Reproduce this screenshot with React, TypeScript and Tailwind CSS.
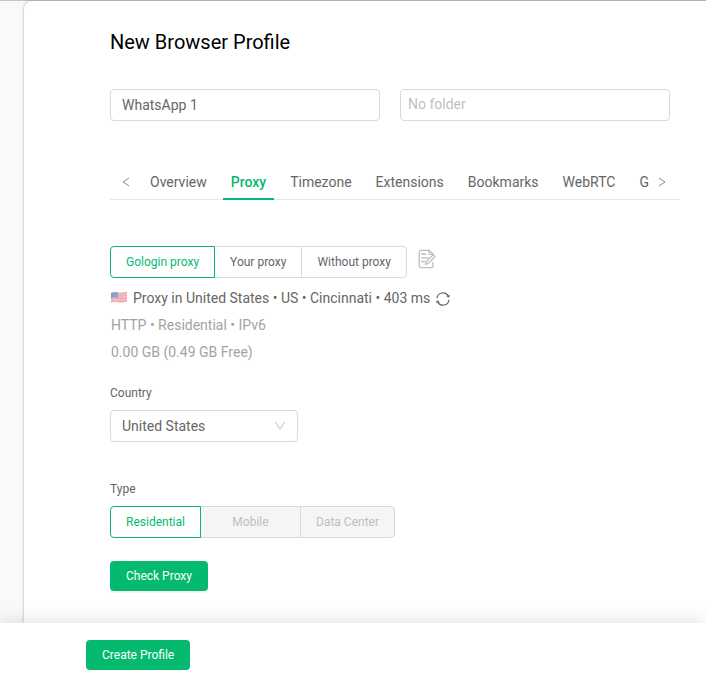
import { useState } from "react";

const tabs = ["Overview", "Proxy", "Timezone", "Extensions", "Bookmarks", "WebRTC", "G"];
const proxySources = ["Gologin proxy", "Your proxy", "Without proxy"];
const proxyTypes = [
  { name: "Residential", disabled: false, width: "w-[91px]" },
  { name: "Mobile", disabled: true, width: "w-[101px]" },
  { name: "Data Center", disabled: true, width: "w-[95px]" },
];

function Chevron({ d, className }: { d: string; className: string }) {
  return (
    <svg viewBox="0 0 12 12" fill="none" stroke="currentColor" className={className} aria-hidden="true">
      <path d={d} />
    </svg>
  );
}

function FlagUS() {
  return (
    <svg viewBox="0 0 18 13" className="mb-[3px] h-[13px] w-[18px] shrink-0 opacity-70" role="img" aria-label="US">
      <path d="M1 2c3-1.300 5-.8 8-.3s5 .2 8-.9v9.700c-3 1.200-5 1.300-8 .8s-5-.8-8 .5z" fill="#f0a9b0" />
      <path
        d="M1 2.600c3-1.300 5-.8 8-.3s5 .2 8-.9M1 5.200c3-1.300 5-.8 8-.3s5 .2 8-.9M1 7.800c3-1.300 5-.8 8-.3s5 .2 8-.9M1 10.600c3-1.300 5-.8 8-.3s5 .2 8-.9"
        fill="none"
        stroke="#ec8089"
        strokeWidth="1.300"
      />
      <path d="M1 2c3-1.300 4.500-.9 7-.4v5.200c-2.500-.5-4-.8-7 .5z" fill="#4779b8" />
      <path d="M2.500 3.500h1M5 3h1M3.500 5h1M6 4.800h1" stroke="#8fadd3" strokeWidth=".7" />
    </svg>
  );
}

function EditNoteIcon() {
  return (
    <svg
      viewBox="0 0 18 20"
      fill="none"
      stroke="currentColor"
      strokeWidth="1.300"
      strokeLinecap="round"
      strokeLinejoin="round"
      className="h-5 w-[18px]"
      aria-hidden="true"
    >
      <path d="M15 6.200V5.300L11.200 1.300H3A1.800 1.800 0 0 0 1.200 3v13.800a1.800 1.800 0 0 0 1.800 1.800h10.200a1.800 1.800 0 0 0 1.800-1.800v-3.500" />
      <path d="M11 1.500v2.700c0 .8.400 1.200 1.200 1.200H15M3.500 5h4M3.500 8.800h7M3.500 12.500h3" />
      <path d="M8.200 12.800l6.400-6.400a1 1 0 0 1 1.500 0l.3.300a1 1 0 0 1 0 1.500L10 14.600l-2.600.8z" />
    </svg>
  );
}

function RefreshIcon() {
  return (
    <svg viewBox="0 0 14 14" fill="none" stroke="currentColor" strokeWidth="1.200" className="size-3.5" aria-hidden="true">
      <path d="M1 6.300a6 6 0 0 1 11.300-2.200M13 7.700A6 6 0 0 1 1.700 9.900" />
      <path d="M13.800 2.700l-.6 3-2.900-1.100zM.2 11.300l.6-3 2.900 1.100z" fill="currentColor" stroke="none" />
    </svg>
  );
}

export default function App() {
  const [profileName, setProfileName] = useState("WhatsApp 1");
  const [activeTab, setActiveTab] = useState("Proxy");
  const [source, setSource] = useState("Gologin proxy");
  const [type, setType] = useState("Residential");

  return (
    <div className="flex min-h-screen flex-col border-t border-[#c4c4c4] bg-[#f9f9f9] font-['Roboto',sans-serif] text-sm text-[#666]">
      <main className="ml-6 flex-1 rounded-tl-lg bg-white pt-[27px] pr-[26px] pb-8 pl-[86px] shadow-[0_0_3px_rgba(0,0,0,0.3)]">
        <h1 className="text-xl leading-7 text-black">New Browser Profile</h1>

        <div className="mt-[33px] mr-2.5 grid grid-cols-2 gap-5">
          <input
            aria-label="Profile name"
            value={profileName}
            onChange={(e) => setProfileName(e.target.value)}
            className="h-8 min-w-0 rounded border border-[#d9d9d9] px-[11px] focus:border-[#05ba6f] focus:outline-none"
          />
          <input
            aria-label="Folder"
            placeholder="No folder"
            className="h-8 min-w-0 rounded border border-[#d9d9d9] px-[7px] pb-0.5 placeholder:text-[#bfbfbf] focus:border-[#05ba6f] focus:outline-none"
          />
        </div>

        <nav className="mt-11 flex h-[35px] border-b border-[#e8e8e8]">
          <button type="button" aria-label="Previous tabs" className="flex w-8 shrink-0 items-center justify-center text-[#888]">
            <Chevron d="M9 2 3 6l6 4" className="size-3" />
          </button>
          <div className="-mb-px flex min-w-0 flex-1 gap-2 overflow-hidden" role="tablist">
            {tabs.map((tab) => (
              <button
                key={tab}
                type="button"
                role="tab"
                aria-selected={tab === activeTab}
                onClick={() => setActiveTab(tab)}
                className={
                  tab === activeTab
                    ? "border-b-2 border-[#05ba6f] px-2 font-medium text-[#05ba6f]"
                    : "border-b-2 border-transparent px-2"
                }
              >
                {tab}
              </button>
            ))}
          </div>
          <button type="button" aria-label="Next tabs" className="flex w-[30px] shrink-0 items-center pl-[7px] text-[#888]">
            <Chevron d="m2 2 6 4-6 4" className="size-3" />
          </button>
        </nav>

        <div className="mt-[46px] flex items-start gap-[11px]">
          <div className="flex text-xs">
            {proxySources.map((name) => (
              <button
                key={name}
                type="button"
                onClick={() => setSource(name)}
                className={
                  name === source
                    ? "relative -ml-px h-8 border border-[#05ba6f] px-[15px] text-[#05ba6f] first:ml-0 first:rounded-l last:rounded-r"
                    : "-ml-px h-8 border border-[#d9d9d9] px-[15px] first:ml-0 first:rounded-l last:rounded-r"
                }
              >
                {name}
              </button>
            ))}
          </div>
          <button type="button" aria-label="Edit proxy" className="mt-[3px] text-[#bfbfbf]">
            <EditNoteIcon />
          </button>
        </div>

        <div className="mt-[7px] leading-[27px]">
          <div className="flex items-center">
            <FlagUS />
            <span className="ml-[5px]">Proxy in United States • US • Cincinnati • 403 ms</span>
            <button type="button" aria-label="Check again" className="ml-1.5">
              <RefreshIcon />
            </button>
          </div>
          <p className="ml-px text-[#a3a3a3]">HTTP • Residential • IPv6</p>
          <p className="ml-px text-[#a3a3a3]">0.00 GB (0.49 GB Free)</p>
        </div>

        <label htmlFor="country" className="mt-[18px] block text-xs leading-[18px]">
          Country
        </label>
        <div className="relative mt-2 w-[188px]">
          <select
            id="country"
            className="h-8 w-full appearance-none rounded border border-[#d9d9d9] bg-white px-[11px] focus:border-[#05ba6f] focus:outline-none"
          >
            <option>United States</option>
          </select>
          <Chevron d="m1 2 5 7 5-7" className="pointer-events-none absolute top-2.5 right-3 size-3 text-[#bfbfbf]" />
        </div>

        <div id="type-label" className="mt-[38px] text-xs leading-[18px]">
          Type
        </div>
        <div role="group" aria-labelledby="type-label" className="mt-2 flex text-xs">
          {proxyTypes.map((item) => (
            <button
              key={item.name}
              type="button"
              disabled={item.disabled}
              onClick={() => setType(item.name)}
              className={`${item.width} -ml-px h-8 border first:ml-0 first:rounded-l last:rounded-r ${
                item.name === type
                  ? "relative border-[#05ba6f] text-[#05ba6f]"
                  : "border-[#d9d9d9] bg-[#f5f5f5] text-[#bfbfbf]"
              }`}
            >
              {item.name}
            </button>
          ))}
        </div>

        <button type="button" className="mt-[23px] h-[30px] rounded bg-[#05ba6f] px-4 text-xs text-white shadow-[0_2px_0_rgba(0,0,0,0.04)]">
          Check Proxy
        </button>
      </main>

      <footer className="sticky bottom-0 z-10 bg-white px-[86px] pt-[17px] pb-[13px] shadow-[0_0_20px_rgba(0,0,0,0.14)]">
        <button type="button" className="block h-[30px] rounded bg-[#05ba6f] px-4 text-xs text-white">
          Create Profile
        </button>
      </footer>
    </div>
  );
}
